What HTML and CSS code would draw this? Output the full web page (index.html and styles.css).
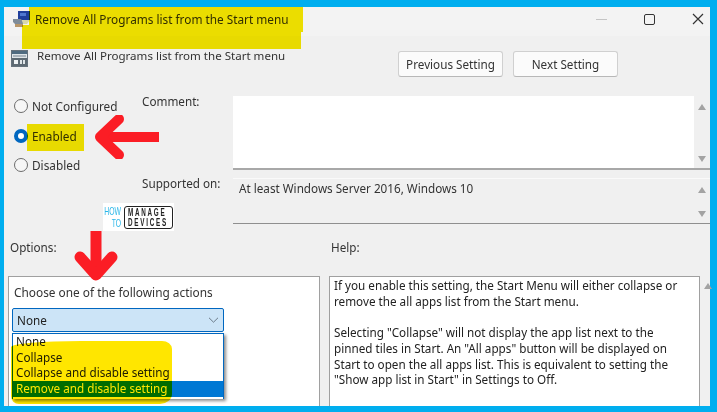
FILE: index.html
```html
<!DOCTYPE html>
<html lang="en">
<head>
<meta charset="utf-8">
<title>Remove All Programs list from the Start menu</title>
<link rel="stylesheet" href="styles.css">
</head>
<body>
<div class="frame">
  <header class="titlebar">
    <svg class="title-icon" width="17" height="16" viewBox="0 0 17 16">
      <rect x="5" y="0" width="12" height="9" fill="#1f3f9c"/>
      <rect x="7" y="2" width="6" height="3" fill="#4f78d0"/>
      <path d="M0 8h8l2 3v2H2L0 11z" fill="#7f8c99"/>
      <path d="M2 13h8v3H2z" fill="#b8966a"/>
      <path d="M9 9h8l-3 4H10z" fill="#d9d7a8"/>
    </svg>
    <span class="title-text">Remove All Programs list from the Start menu</span>
    <div class="window-controls">
      <span class="win-min"></span>
      <span class="win-max"></span>
      <svg class="win-close" width="12" height="12" viewBox="0 0 12 12"><path d="M1 1l10 10M11 1L1 11" stroke="#333" stroke-width="1.2" fill="none"/></svg>
    </div>
  </header>

  <div class="toolbar">
    <svg class="setting-icon" width="17" height="17" viewBox="0 0 17 17">
      <rect x=".5" y=".5" width="16" height="16" fill="#dfe5e8" stroke="#66727c"/>
      <rect x="1" y="1" width="15" height="3" fill="#4f6b80"/>
      <rect x="2" y="5" width="13" height="2" fill="#aab4bc"/>
      <rect x="1" y="8" width="15" height="8" fill="#5d6972"/>
      <rect x="3" y="10" width="4" height="4" fill="#eef1f3"/>
      <rect x="9" y="10" width="2" height="4" fill="#dfe5e8"/>
      <rect x="12" y="10" width="2" height="4" fill="#dfe5e8"/>
    </svg>
    <span class="setting-name">Remove All Programs list from the Start menu</span>
    <div class="nav-buttons">
      <button class="nav-btn">Previous Setting</button>
      <button class="nav-btn">Next Setting</button>
    </div>
  </div>

  <div class="middle">
    <div class="radios">
      <label class="radio"><span class="dot"></span><span class="radio-text">Not Configured</span></label>
      <label class="radio"><span class="dot dot-on"></span><span class="radio-text">Enabled</span></label>
      <label class="radio"><span class="dot"></span><span class="radio-text">Disabled</span></label>
    </div>
    <div class="fields">
      <div class="field-label">Comment:</div>
      <div class="comment-box">
        <div class="scrollbar"><i class="tri-up"></i><i class="tri-down"></i></div>
      </div>
      <div class="field-label">Supported on:</div>
      <div class="supported-box">
        <span class="supported-text">At least Windows Server 2016, Windows 10</span>
        <div class="scrollbar"><i class="tri-up"></i><i class="tri-down"></i></div>
      </div>
    </div>
  </div>

  <div class="section-labels">
    <span class="options-label">Options:</span>
    <span class="help-label">Help:</span>
  </div>

  <div class="panels">
    <section class="options-panel">
      <div class="choose">Choose one of the following actions</div>
      <div class="select-wrap">
        <div class="select">
          <span>None</span>
          <svg width="11" height="6" viewBox="0 0 11 6"><path d="M1 .8l4.5 4.4L10 .8" stroke="#6b7a88" stroke-width="1" fill="none"/></svg>
        </div>
        <ul class="list">
          <li>None</li>
          <li>Collapse</li>
          <li>Collapse and disable setting</li>
          <li class="selected">Remove and disable setting</li>
        </ul>
      </div>
    </section>
    <section class="help-panel">
      <p>If you enable this setting, the Start Menu will either collapse or<br>remove the all apps list from the Start menu.</p>
      <p>Selecting "Collapse" will not display the app list next to the<br>pinned tiles in Start. An "All apps" button will be displayed on<br>Start to open the all apps list. This is equivalent to setting the<br>"Show app list in Start" in Settings to Off.</p>
    </section>
    <div class="help-scroll"><i class="tri-up"></i></div>
  </div>
</div>

<div class="logo">
  <div class="logo-how"><span>HOW</span><span>TO</span></div>
  <div class="logo-box"><span>MANAGE</span><span>DEVICES</span></div>
</div>

<div class="marker marker-title"></div>
<div class="marker marker-enabled"></div>
<div class="marker marker-list"></div>

<svg class="arrow arrow-left" width="68" height="44" viewBox="0 0 68 44">
  <path d="M66 22H10" stroke="#fb1d25" stroke-width="10" fill="none"/>
  <path d="M26 4L7 22l19 18" stroke="#fb1d25" stroke-width="10" stroke-linecap="round" stroke-linejoin="round" fill="none"/>
</svg>
<svg class="arrow arrow-down" width="48" height="56" viewBox="0 0 48 56">
  <path d="M24 2V46" stroke="#fb1d25" stroke-width="11" fill="none"/>
  <path d="M8 28l16 18 16-18" stroke="#fb1d25" stroke-width="11" stroke-linecap="round" stroke-linejoin="round" fill="none"/>
</svg>
</body>
</html>
```
FILE: styles.css
```css
* { box-sizing: border-box; }
html, body { margin: 0; padding: 0; }
body {
  width: 717px;
  height: 412px;
  overflow: hidden;
  position: relative;
  font-family: "Noto Sans", "Open Sans", sans-serif;
  font-size: 11.7px;
  color: #333;
  filter: blur(.3px);
}
.frame {
  width: 717px;
  height: 412px;
  border-style: solid;
  border-color: #00aeef;
  border-width: 7px 7px 6px 4px;
  background: #f0f0f0;
  display: flex;
  flex-direction: column;
}

/* title bar */
.titlebar {
  height: 29px;
  flex: none;
  display: flex;
  align-items: center;
  background: #f3f3f3;
  padding-left: 9px;
}
.title-icon { flex: none; margin-right: 5px; margin-top: -5px; }
.title-text { margin-top: -6px; color: #333; font-size: 11.8px; }
.window-controls { margin-left: auto; display: flex; align-items: center; margin-top: -5px; }
.win-min { width: 11px; height: 1px; background: #c4c4c4; margin-right: 37px; }
.win-max { width: 11px; height: 11px; border: 1.3px solid #333; border-radius: 2px; margin-right: 37px; }
.win-close { margin-right: 6px; }

/* toolbar */
.toolbar {
  height: 55px;
  flex: none;
  display: flex;
  align-items: flex-start;
  padding-left: 7px;
  padding-top: 14px;
}
.setting-icon { flex: none; margin-right: 9px; }
.setting-name { margin-top: -2px; font-size: 11.55px; }
.nav-buttons { margin-left: auto; margin-right: 92px; margin-top: 1px; display: flex; gap: 10px; }
.nav-btn {
  width: 105px;
  height: 26px;
  padding: 0;
  background: #fbfbfb;
  border: 1px solid #d0d0d0;
  border-bottom-color: #b8b8b8;
  border-radius: 3px;
  font: inherit;
  color: #333;
}

/* middle */
.middle { height: 133px; flex: none; display: flex; }
.radios { width: 138px; flex: none; padding-left: 10px; padding-top: .5px; }
.radio { height: 29.5px; display: flex; align-items: center; font-size: 11.8px; }
.dot {
  width: 14px;
  height: 14px;
  border-radius: 50%;
  border: 1px solid #6c6c6c;
  background: #f6f6f6;
  margin-right: 4px;
  flex: none;
}
.dot-on { border: 4px solid #0067c0; background: #fff; }
.fields {
  flex: 1;
  display: grid;
  grid-template-columns: 91px 1fr;
  grid-template-rows: 74px 46px;
  row-gap: 8px;
  padding-top: 5px;
}
.field-label { margin-top: -3px; line-height: 16px; }
.comment-box {
  background: #fff;
  border-bottom: 2px solid #a8a8a8;
  display: flex;
  justify-content: flex-end;
}
.supported-box {
  background: #f0f0f0;
  border-top: 1px solid #fafafa;
  border-bottom: 1px solid #8f8f8f;
  display: flex;
  justify-content: space-between;
}
.supported-text { padding: 0 0 0 6px; line-height: 18px; }
.scrollbar {
  width: 16px;
  background: #f0f0f0;
  display: flex;
  flex-direction: column;
  justify-content: space-between;
  align-items: center;
  padding: 8px 0 6px;
}
.tri-up, .tri-down {
  display: block;
  width: 0;
  height: 0;
  border-left: 4px solid transparent;
  border-right: 4px solid transparent;
}
.tri-up { border-bottom: 6px solid #a3a3a3; }
.tri-down { border-top: 6px solid #a3a3a3; }

/* section labels */
.section-labels { height: 52px; flex: none; display: flex; padding-top: 15px; line-height: 16px; }
.options-label { width: 327px; padding-left: 6px; flex: none; }

/* panels */
.panels { flex: 1; min-height: 0; display: flex; padding-left: 4px; }
.options-panel {
  width: 312px;
  flex: none;
  background: #fff;
  border: 1px solid #a0a0a0;
  border-bottom: 0;
  padding: 7px 3px 0;
}
.choose { padding-left: 2px; line-height: 16px; font-size: 11.85px; }
.select-wrap { position: relative; margin-top: 8px; }
.select {
  width: 212px;
  height: 24px;
  background: #cce4f7;
  border: 1px solid #0067c0;
  border-radius: 2px;
  display: flex;
  align-items: center;
  justify-content: space-between;
  padding: 0 4px;
  color: #222;
}
.list {
  position: absolute;
  left: 0;
  top: 25px;
  width: 212px;
  height: 66px;
  margin: 0;
  padding: 0;
  list-style: none;
  background: #fff;
  border: 1px solid #0067c0;
  border-bottom: 0;
  box-shadow: 2px 2px 3px rgba(0, 0, 0, .45);
}
.list li { height: 15.7px; line-height: 15.7px; padding-left: 3px; color: #222; }
.list .selected { background: #0078d4; color: #fff; }
.help-panel {
  width: 371px;
  margin-left: 9px;
  flex: none;
  background: #fff;
  border: 1px solid #a0a0a0;
  border-bottom: 0;
  padding: 1px 0 0 4px;
  line-height: 15.7px;
  color: #222;
}
.help-panel p { margin: 0 0 15.7px; white-space: nowrap; }
.help-scroll { width: 11px; padding: 7px 0 0 4px; }

/* overlays */
.logo {
  position: absolute;
  left: 103px;
  top: 203px;
  width: 71px;
  height: 28px;
  background: #fff;
  display: flex;
  align-items: center;
  justify-content: space-between;
  padding: 0 1px;
  font-family: "Liberation Sans", sans-serif;
  font-size: 11px;
  line-height: 12px;
}
.logo-how {
  width: 17px;
  display: flex;
  flex-direction: column;
  align-items: flex-end;
  color: #29b6e8;
}
.logo-how span { transform: scaleX(.62); transform-origin: right; white-space: nowrap; }
.logo-box {
  width: 49px;
  height: 23px;
  display: flex;
  flex-direction: column;
  justify-content: center;
  border: 1px solid #222;
  border-radius: 3px;
  padding-left: 3px;
  color: #222;
  font-weight: 700;
  letter-spacing: 2.9px;
  line-height: 10.5px;
  font-size: 10.5px;
}
.logo-box span { transform: scaleX(.6); transform-origin: left; white-space: nowrap; }
.marker { position: absolute; background: #f7e800; mix-blend-mode: multiply; }
.marker-title {
  left: 22px;
  top: 7px;
  width: 281px;
  height: 42px;
  clip-path: polygon(7px 0, 281px 0, 281px 25px, 279px 25px, 279px 42px, 0 42px, 0 18px, 7px 18px);
}
.marker-enabled { left: 27px; top: 124px; width: 57px; height: 27px; }
.marker-list {
  left: 11px;
  top: 341px;
  width: 161px;
  height: 63px;
  background: #ffe600;
  border-radius: 70px 10px 12px 8px / 6px 8px 10px 8px;
}
.arrow { position: absolute; }
.arrow-left { left: 93px; top: 115px; }
.arrow-down { left: 72px; top: 229px; }
```
